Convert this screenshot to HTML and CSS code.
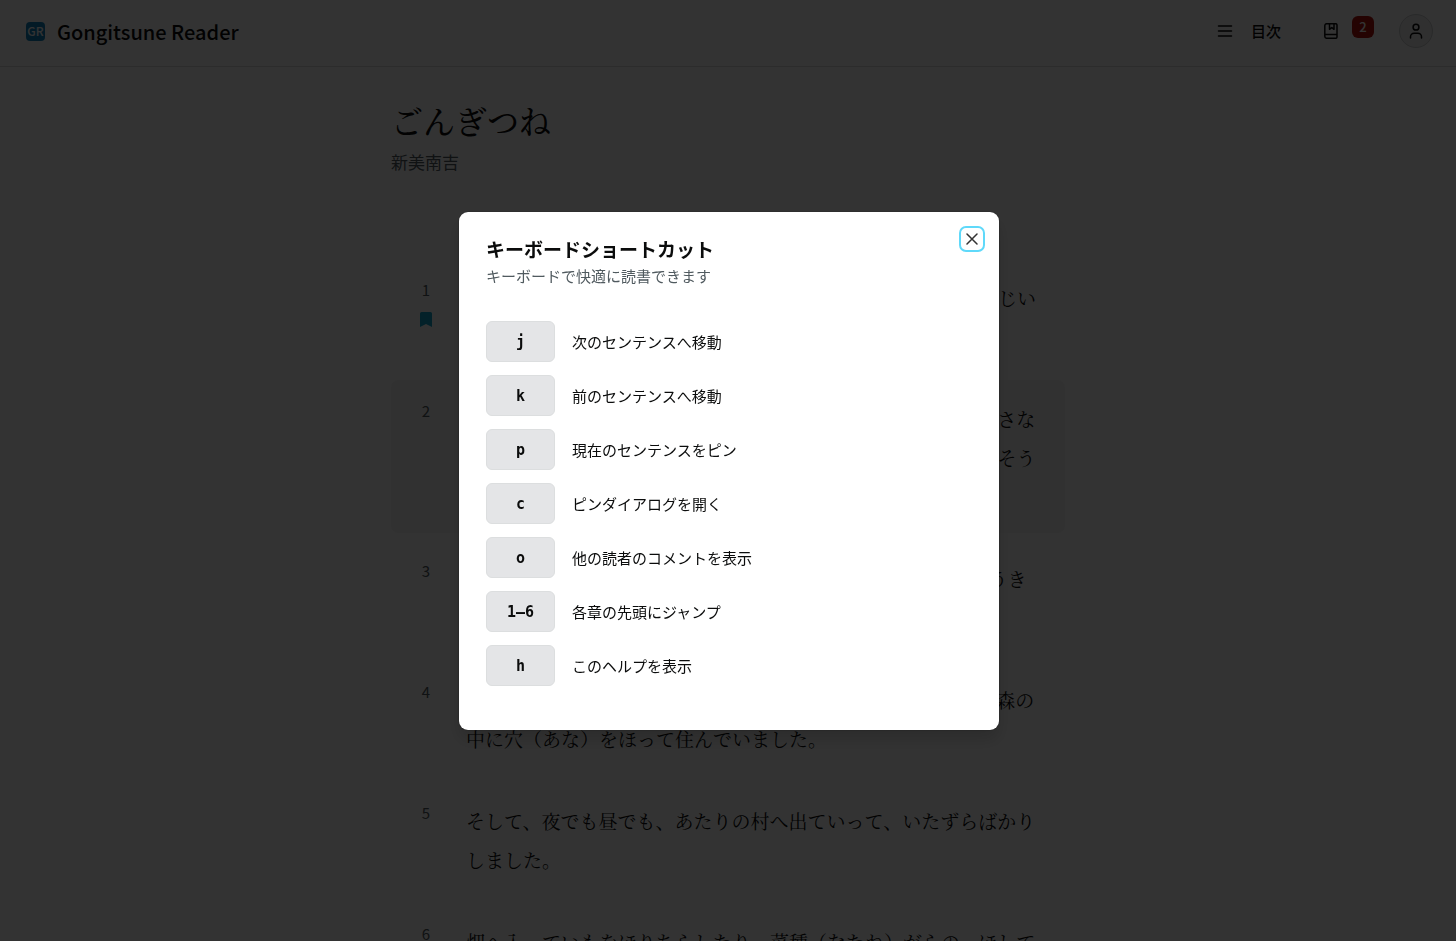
FILE: index.html
```
<!DOCTYPE html>
<html lang="ja">
<head>
    <meta charset="utf-8">
    <meta name="viewport" content="width=device-width, initial-scale=1">
    <title>Gongitsune Reader</title>
    <link rel="stylesheet" href="styles.css">
</head>
<body>
    <header class="header">
        <a class="brand" href="#"><span class="logo">GR</span><span class="name">Gongitsune Reader</span></a>
        <nav class="nav">
            <button class="nav-btn toc" type="button">
                <svg width="16" height="16" viewBox="0 0 16 16"><path d="M1.500 3h13M1.500 8h13M1.500 13h13" /></svg>目次
            </button>
            <button class="nav-btn pins" type="button" aria-label="ピン">
                <svg width="16" height="16" viewBox="0 0 16 16"><path d="M14 11.500V2a1.300 1.300 0 0 0-1.300-1.300H3.800A2 2 0 0 0 1.800 2.700V13.300A2 2 0 0 0 3.800 15.300H12.700A1.300 1.300 0 0 0 14 14V11.500H2M6.500 1V6.300L8.800 4.500 11 6.300V1" /></svg>
                <span class="badge">2</span>
            </button>
            <button class="avatar" type="button" aria-label="アカウント">
                <svg width="16" height="16" viewBox="0 0 16 16"><circle cx="8" cy="4.200" r="2.900" /><path d="M2.500 15v-1.200A3.600 3.600 0 0 1 6.100 10.200h3.800a3.600 3.600 0 0 1 3.600 3.600V15" /></svg>
            </button>
        </nav>
    </header>

    <main class="reader">
        <h1>ごんぎつね</h1>
        <p class="author">新美南吉</p>
        <div class="sentences">
            <div class="sentence">
                <div class="num">1<svg class="mark" width="12" height="15" viewBox="0 0 12 15"><path d="M0 1.500A1.500 1.500 0 0 1 1.500 0h9A1.500 1.500 0 0 1 12 1.500V15L6 12 0 15z" /></svg></div>
                <p>これは、わたしが小さいときに、村の茂平（もへい）というおじいさんからきいたお話です。</p>
            </div>
            <div class="sentence active">
                <div class="num">2</div>
                <p>むかしは、わたしたちの村のちかくの、中山というところに小さなお城があって、中山さまというおとのさまが、ひとりおられたそうです。</p>
            </div>
            <div class="sentence">
                <div class="num">3</div>
                <p>その中山から、すこしはなれた山の中に、「ごんぎつね」というきつねがいました。</p>
            </div>
            <div class="sentence">
                <div class="num">4</div>
                <p>ごんは、ひとりぼっちの小ぎつねで、しだのいっぱいしげった森の中に穴（あな）をほって住んでいました。</p>
            </div>
            <div class="sentence">
                <div class="num">5</div>
                <p>そして、夜でも昼でも、あたりの村へ出ていって、いたずらばかりしました。</p>
            </div>
            <div class="sentence">
                <div class="num">6</div>
                <p>畑へ入っていもをほりちらしたり、菜種（なたね）がらの、ほしてあるのへ火をつけたりしました。</p>
            </div>
        </div>
    </main>

    <div class="overlay">
        <div class="dialog" role="dialog" aria-modal="true" aria-labelledby="help-title">
            <button class="close" type="button" aria-label="閉じる">
                <svg width="12" height="12" viewBox="0 0 12 12"><path d="M1 1l10 10M11 1L1 11" /></svg>
            </button>
            <h2 id="help-title">キーボードショートカット</h2>
            <p class="lead">キーボードで快適に読書できます</p>
            <dl class="keys">
                <div><dt><kbd>j</kbd></dt><dd>次のセンテンスへ移動</dd></div>
                <div><dt><kbd>k</kbd></dt><dd>前のセンテンスへ移動</dd></div>
                <div><dt><kbd>p</kbd></dt><dd>現在のセンテンスをピン</dd></div>
                <div><dt><kbd>c</kbd></dt><dd>ピンダイアログを開く</dd></div>
                <div><dt><kbd>o</kbd></dt><dd>他の読者のコメントを表示</dd></div>
                <div><dt><kbd>1–6</kbd></dt><dd>各章の先頭にジャンプ</dd></div>
                <div><dt><kbd>h</kbd></dt><dd>このヘルプを表示</dd></div>
            </dl>
        </div>
    </div>
</body>
</html>
```
FILE: styles.css
```
* { box-sizing: border-box; }
html, body { height: 100%; }
body { margin: 0; overflow: hidden; background: #fff; color: #0b0c0c; font-family: "Noto Sans CJK JP", "Noto Sans", sans-serif; font-size: 15px; line-height: 24px; }
h1, h2, p, dl, dd { margin: 0; }
button { border: 0; padding: 0; background: none; color: inherit; font: inherit; cursor: pointer; }
svg { display: block; fill: none; stroke: currentColor; stroke-width: 1.5; stroke-linecap: round; stroke-linejoin: round; }

/* header */
.header { display: flex; align-items: center; justify-content: space-between; height: 67px; padding: 0 23px 4px 26px; border-bottom: 1px solid #dcdcdc; }
.brand { display: flex; align-items: center; gap: 12px; color: inherit; text-decoration: none; font-size: 20px; font-weight: 500; line-height: 30px; }
.name { padding-top: 2px; }
.logo { display: flex; align-items: center; justify-content: center; width: 19px; height: 19px; border-radius: 4px; background: #1383bd; color: #fff; font-size: 12px; line-height: 18px; }
.nav { display: flex; align-items: center; }
.nav-btn { display: flex; align-items: center; font-weight: 500; }
.toc { gap: 18px; margin-right: 42px; }
.pins { gap: 13px; margin-right: 25px; }
.badge { width: 22px; height: 22px; margin-bottom: 9px; border-radius: 6px; background: #b3120a; color: #fff; font-size: 13px; line-height: 22px; text-align: center; }
.avatar { display: flex; align-items: center; justify-content: center; width: 34px; height: 34px; border: 1px solid #cdcfd0; border-radius: 50%; background: #eee; }

/* text */
.reader { max-width: 674px; margin: 0 auto; padding-top: 28px; }
h1 { font-family: "Noto Serif CJK JP", "Noto Serif JP", "Noto Sans CJK JP", serif; font-size: 32px; font-weight: 500; line-height: 50px; }
.author { color: #505a5f; font-size: 17px; line-height: 34px; }
.sentences { display: flex; flex-direction: column; gap: 7px; margin-top: 80px; }
.sentence { display: flex; gap: 18px; padding: 19px 22px 17px 13px; border-radius: 7px; }
.sentence p { flex: 1; font-family: "Noto Serif CJK JP", "Noto Serif JP", "Noto Sans CJK JP", serif; font-size: 19px; line-height: 39px; }
.active { background: #f6f6f6; }
.num { width: 44px; color: #505a5f; text-align: center; }
.mark { margin: 10px auto 0; fill: #12a5cc; stroke: none; }

/* help dialog */
.overlay { position: fixed; inset: 0; display: flex; align-items: center; justify-content: center; padding-left: 2px; background: rgba(0, 0, 0, 0.8); }
.dialog { position: relative; width: 540px; max-width: 100%; padding: 24px 27px 44px; border-radius: 9px; background: #fff; box-shadow: 0 10px 16px rgba(0, 0, 0, 0.15), 0 0 2px rgba(0, 0, 0, 0.4); }
h2 { font-size: 19px; font-weight: 700; line-height: 26px; }
.lead { color: #505a5f; line-height: 28px; }
.close { position: absolute; top: 14px; right: 14px; display: flex; align-items: center; justify-content: center; width: 26px; height: 26px; border: 2px solid #5fd9fa; border-radius: 7px; color: #333; }
.keys { display: flex; flex-direction: column; gap: 13px; margin-top: 31px; }
.keys div { display: flex; align-items: center; gap: 17px; }
.keys dd { padding-top: 1px; }
kbd { display: block; width: 69px; height: 41px; border: 1px solid #dcdedf; border-radius: 6px; background: #e4e5e7; font-family: "DejaVu Sans Mono", monospace; font-size: 15px; font-weight: 700; line-height: 40px; text-align: center; }
```
